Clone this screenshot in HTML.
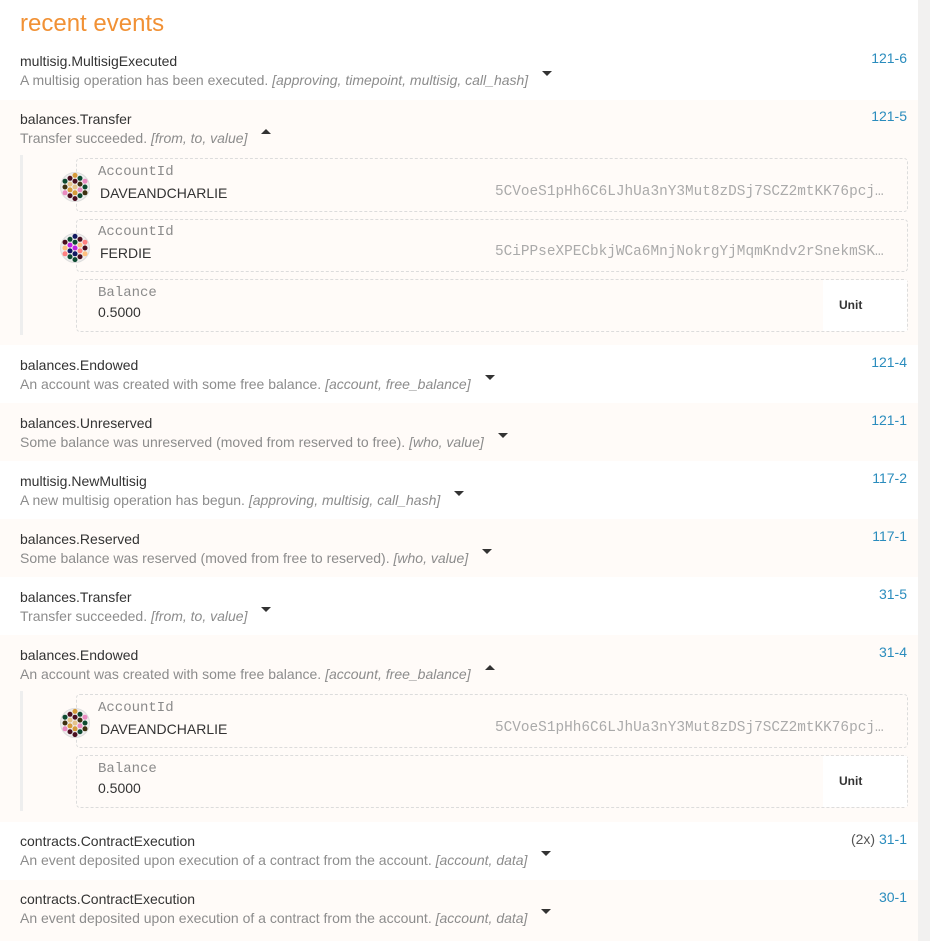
<!DOCTYPE html>
<html><head><meta charset="utf-8"><style>
*{margin:0;padding:0;box-sizing:border-box}
body{width:930px;height:941px;background:#f2f1f0;font-family:"Liberation Sans",sans-serif;position:relative;overflow:hidden}
#main{position:absolute;left:0;top:0;width:918px;height:941px;background:#fff}
h1{position:absolute;left:20px;top:10px;font-size:24px;font-weight:normal;color:#f19135}
.row{position:absolute;left:0;width:918px}
.cream{background:#fffbf8}
.t{position:absolute;left:20px;font-size:14px;color:#333;white-space:nowrap}
.d{position:absolute;left:20px;font-size:14px;color:#8c8c8c;white-space:nowrap}
.d i{font-style:italic}
.car{display:inline-block;margin-left:14px;width:0;height:0;border-left:5px solid transparent;border-right:5px solid transparent;vertical-align:middle;position:relative;top:-8px}
.dn{border-top:5px solid #333}
.up{border-bottom:5px solid #333}
.n{position:absolute;right:11px;font-size:14px;color:#2a8cbd;white-space:nowrap}
.n span{color:#555}
.bar{position:absolute;left:20px;width:3px;background:#eeeeee}
.box{position:absolute;left:76px;width:832px;border:1px dashed #dcdcdc;border-radius:4px}
.lab{position:absolute;left:21px;font-family:"Liberation Mono",monospace;font-size:14px;color:#8a8a8a}
.val{position:absolute;left:23px;font-size:14px;color:#333}
.addr{position:absolute;left:418px;font-family:"Liberation Mono",monospace;font-size:14.4px;color:#aaa;white-space:nowrap}
.unit{position:absolute;right:0;top:0;bottom:0;width:84px;background:#fff;font-size:12px;font-weight:bold;color:#333;padding-left:16px;line-height:50px}
.av{position:absolute;left:-17px;top:13px}
</style></head><body>
<div id="main">
<h1>recent events</h1>

<div class="row" style="top:44px;height:56px">
<div class="t" style="top:9px">multisig.MultisigExecuted</div>
<div class="d" style="top:28px">A multisig operation has been executed. <i>[approving, timepoint, multisig, call_hash]</i><span class="car dn"></span></div>
<div class="n" style="top:6px">121-6</div></div>

<div class="row cream" style="top:100px;height:245px">
<div class="t" style="top:11px">balances.Transfer</div>
<div class="d" style="top:30px">Transfer succeeded. <i>[from, to, value]</i><span class="car up"></span></div>
<div class="n" style="top:8px">121-5</div>
<div class="bar" style="top:55px;height:180px"></div>
<div class="box" style="top:58px;height:54px"><svg class="av" width="30" height="30" data-c="a"></svg><div class="lab" style="top:5px">AccountId</div><div class="val" style="top:26px">DAVEANDCHARLIE</div><div class="addr" style="top:25px">5CVoeS1pHh6C6LJhUa3nY3Mut8zDSj7SCZ2mtKK76pcj…</div></div>
<div class="box" style="top:119px;height:53px"><svg class="av" width="30" height="30" data-c="b"></svg><div class="lab" style="top:4px">AccountId</div><div class="val" style="top:25px">FERDIE</div><div class="addr" style="top:24px">5CiPPseXPECbkjWCa6MnjNokrgYjMqmKndv2rSnekmSK…</div></div>
<div class="box" style="top:179px;height:53px"><div class="lab" style="top:5px">Balance</div><div class="val" style="top:24px;left:21px">0.5000</div><div class="unit">Unit</div></div>
</div>

<div class="row" style="top:345px;height:58px">
<div class="t" style="top:12px">balances.Endowed</div>
<div class="d" style="top:31px">An account was created with some free balance. <i>[account, free_balance]</i><span class="car dn"></span></div>
<div class="n" style="top:9px">121-4</div></div>

<div class="row cream" style="top:403px;height:58px">
<div class="t" style="top:12px">balances.Unreserved</div>
<div class="d" style="top:31px">Some balance was unreserved (moved from reserved to free). <i>[who, value]</i><span class="car dn"></span></div>
<div class="n" style="top:9px">121-1</div></div>

<div class="row" style="top:461px;height:58px">
<div class="t" style="top:12px">multisig.NewMultisig</div>
<div class="d" style="top:31px">A new multisig operation has begun. <i>[approving, multisig, call_hash]</i><span class="car dn"></span></div>
<div class="n" style="top:9px">117-2</div></div>

<div class="row cream" style="top:519px;height:58px">
<div class="t" style="top:12px">balances.Reserved</div>
<div class="d" style="top:31px">Some balance was reserved (moved from free to reserved). <i>[who, value]</i><span class="car dn"></span></div>
<div class="n" style="top:9px">117-1</div></div>

<div class="row" style="top:577px;height:58px">
<div class="t" style="top:12px">balances.Transfer</div>
<div class="d" style="top:31px">Transfer succeeded. <i>[from, to, value]</i><span class="car dn"></span></div>
<div class="n" style="top:9px">31-5</div></div>

<div class="row cream" style="top:635px;height:187px">
<div class="t" style="top:12px">balances.Endowed</div>
<div class="d" style="top:31px">An account was created with some free balance. <i>[account, free_balance]</i><span class="car up"></span></div>
<div class="n" style="top:9px">31-4</div>
<div class="bar" style="top:56px;height:120px"></div>
<div class="box" style="top:59px;height:54px"><svg class="av" width="30" height="30" data-c="a"></svg><div class="lab" style="top:5px">AccountId</div><div class="val" style="top:26px">DAVEANDCHARLIE</div><div class="addr" style="top:25px">5CVoeS1pHh6C6LJhUa3nY3Mut8zDSj7SCZ2mtKK76pcj…</div></div>
<div class="box" style="top:120px;height:53px"><div class="lab" style="top:5px">Balance</div><div class="val" style="top:24px;left:21px">0.5000</div><div class="unit">Unit</div></div>
</div>

<div class="row" style="top:822px;height:58px">
<div class="t" style="top:11px">contracts.ContractExecution</div>
<div class="d" style="top:30px">An event deposited upon execution of a contract from the account. <i>[account, data]</i><span class="car dn"></span></div>
<div class="n" style="top:9px"><span>(2x)</span> 31-1</div></div>

<div class="row cream" style="top:880px;height:61px">
<div class="t" style="top:11px">contracts.ContractExecution</div>
<div class="d" style="top:30px">An event deposited upon execution of a contract from the account. <i>[account, data]</i><span class="car dn"></span></div>
<div class="n" style="top:9px">30-1</div></div>
</div>
<script>
var pal={a:["#0d4a30","#d69b3a","#3d3010","#4a0f20","#e98ac0","#e5c38a"],b:["#0d4a30","#ff8080","#c020e0","#4a0f20","#101860","#ffc080"]};
document.querySelectorAll('svg.av').forEach(function(s,k){
 var p=pal[s.getAttribute('data-c')];var h='<circle cx="15" cy="15" r="14.5" fill="#eee" stroke="#ddd"/>';
 var cols=[[-10,3],[-5,4],[0,5],[5,4],[10,3]],i=0;
 cols.forEach(function(c){var n=c[1];for(var j=0;j<n;j++){var y=15+(j-(n-1)/2)*5.8;h+='<circle cx="'+(15+c[0]*1.0)+'" cy="'+y+'" r="2.5" fill="'+p[(i*7+k*3+j)%p.length]+'"/>';i++;}});
 s.innerHTML=h;});
</script>
</body></html>
